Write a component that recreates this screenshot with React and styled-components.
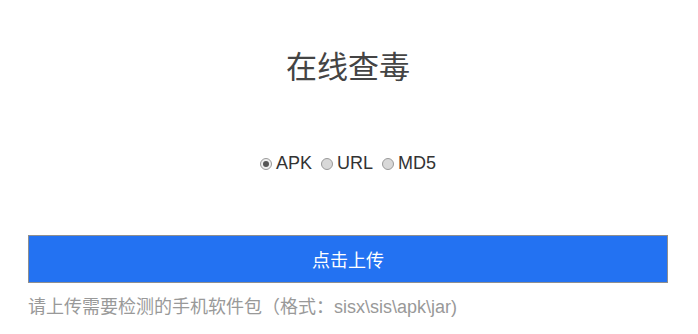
import React, { useState } from "react";
import styled, { createGlobalStyle } from "styled-components";

const Global = createGlobalStyle`
  body {
    margin: 0;
    background: #fff;
    font-family: "Liberation Sans", Arial, "Noto Sans CJK SC", sans-serif;
  }
`;

const Page = styled.div`
  width: 640px;
  margin-left: 28px;
  padding-top: 44px;
`;

const Title = styled.h1`
  margin: 0;
  text-align: center;
  font-size: 31px;
  font-weight: normal;
  line-height: 48px;
  color: #444;
`;

const Options = styled.div`
  margin-top: 59px;
  display: flex;
  justify-content: center;
  gap: 9px;
  height: 24px;
  align-items: center;
`;

const Option = styled.label`
  display: flex;
  align-items: center;
  gap: 4px;
  font-size: 18px;
  color: #333;
  cursor: pointer;
`;

const Dot = styled.span`
  width: 10px;
  height: 10px;
  border-radius: 50%;
  border: 1px solid #9a9a9a;
  background: ${(p) => (p.$on ? "#eee" : "#d8d8d8")};
  display: flex;
  align-items: center;
  justify-content: center;
  margin-top: 1px;

  &::after {
    content: "";
    width: 6px;
    height: 6px;
    border-radius: 50%;
    background: ${(p) => (p.$on ? "#555" : "transparent")};
  }
`;

const UploadButton = styled.button`
  display: block;
  width: 100%;
  margin-top: 60px;
  height: 48px;
  border: 1px solid #8f8f8f;
  background: #2372f2;
  color: #fff;
  font-family: "Liberation Sans", "Noto Sans CJK SC", sans-serif;
  font-size: 18px;
  cursor: pointer;
`;

const Hint = styled.p`
  margin: 11px 0 0;
  font-size: 18px;
  line-height: 26px;
  color: #999;
`;

export default function App() {
  const [type, setType] = useState("APK");
  return (
    <Page>
      <Global />
      <Title>在线查毒</Title>
      <Options>
        {["APK", "URL", "MD5"].map((t) => (
          <Option key={t} onClick={() => setType(t)}>
            <Dot $on={type === t} />
            {t}
          </Option>
        ))}
      </Options>
      <UploadButton>点击上传</UploadButton>
      <Hint>请上传需要检测的手机软件包（格式：sisx\sis\apk\jar)</Hint>
    </Page>
  );
}
